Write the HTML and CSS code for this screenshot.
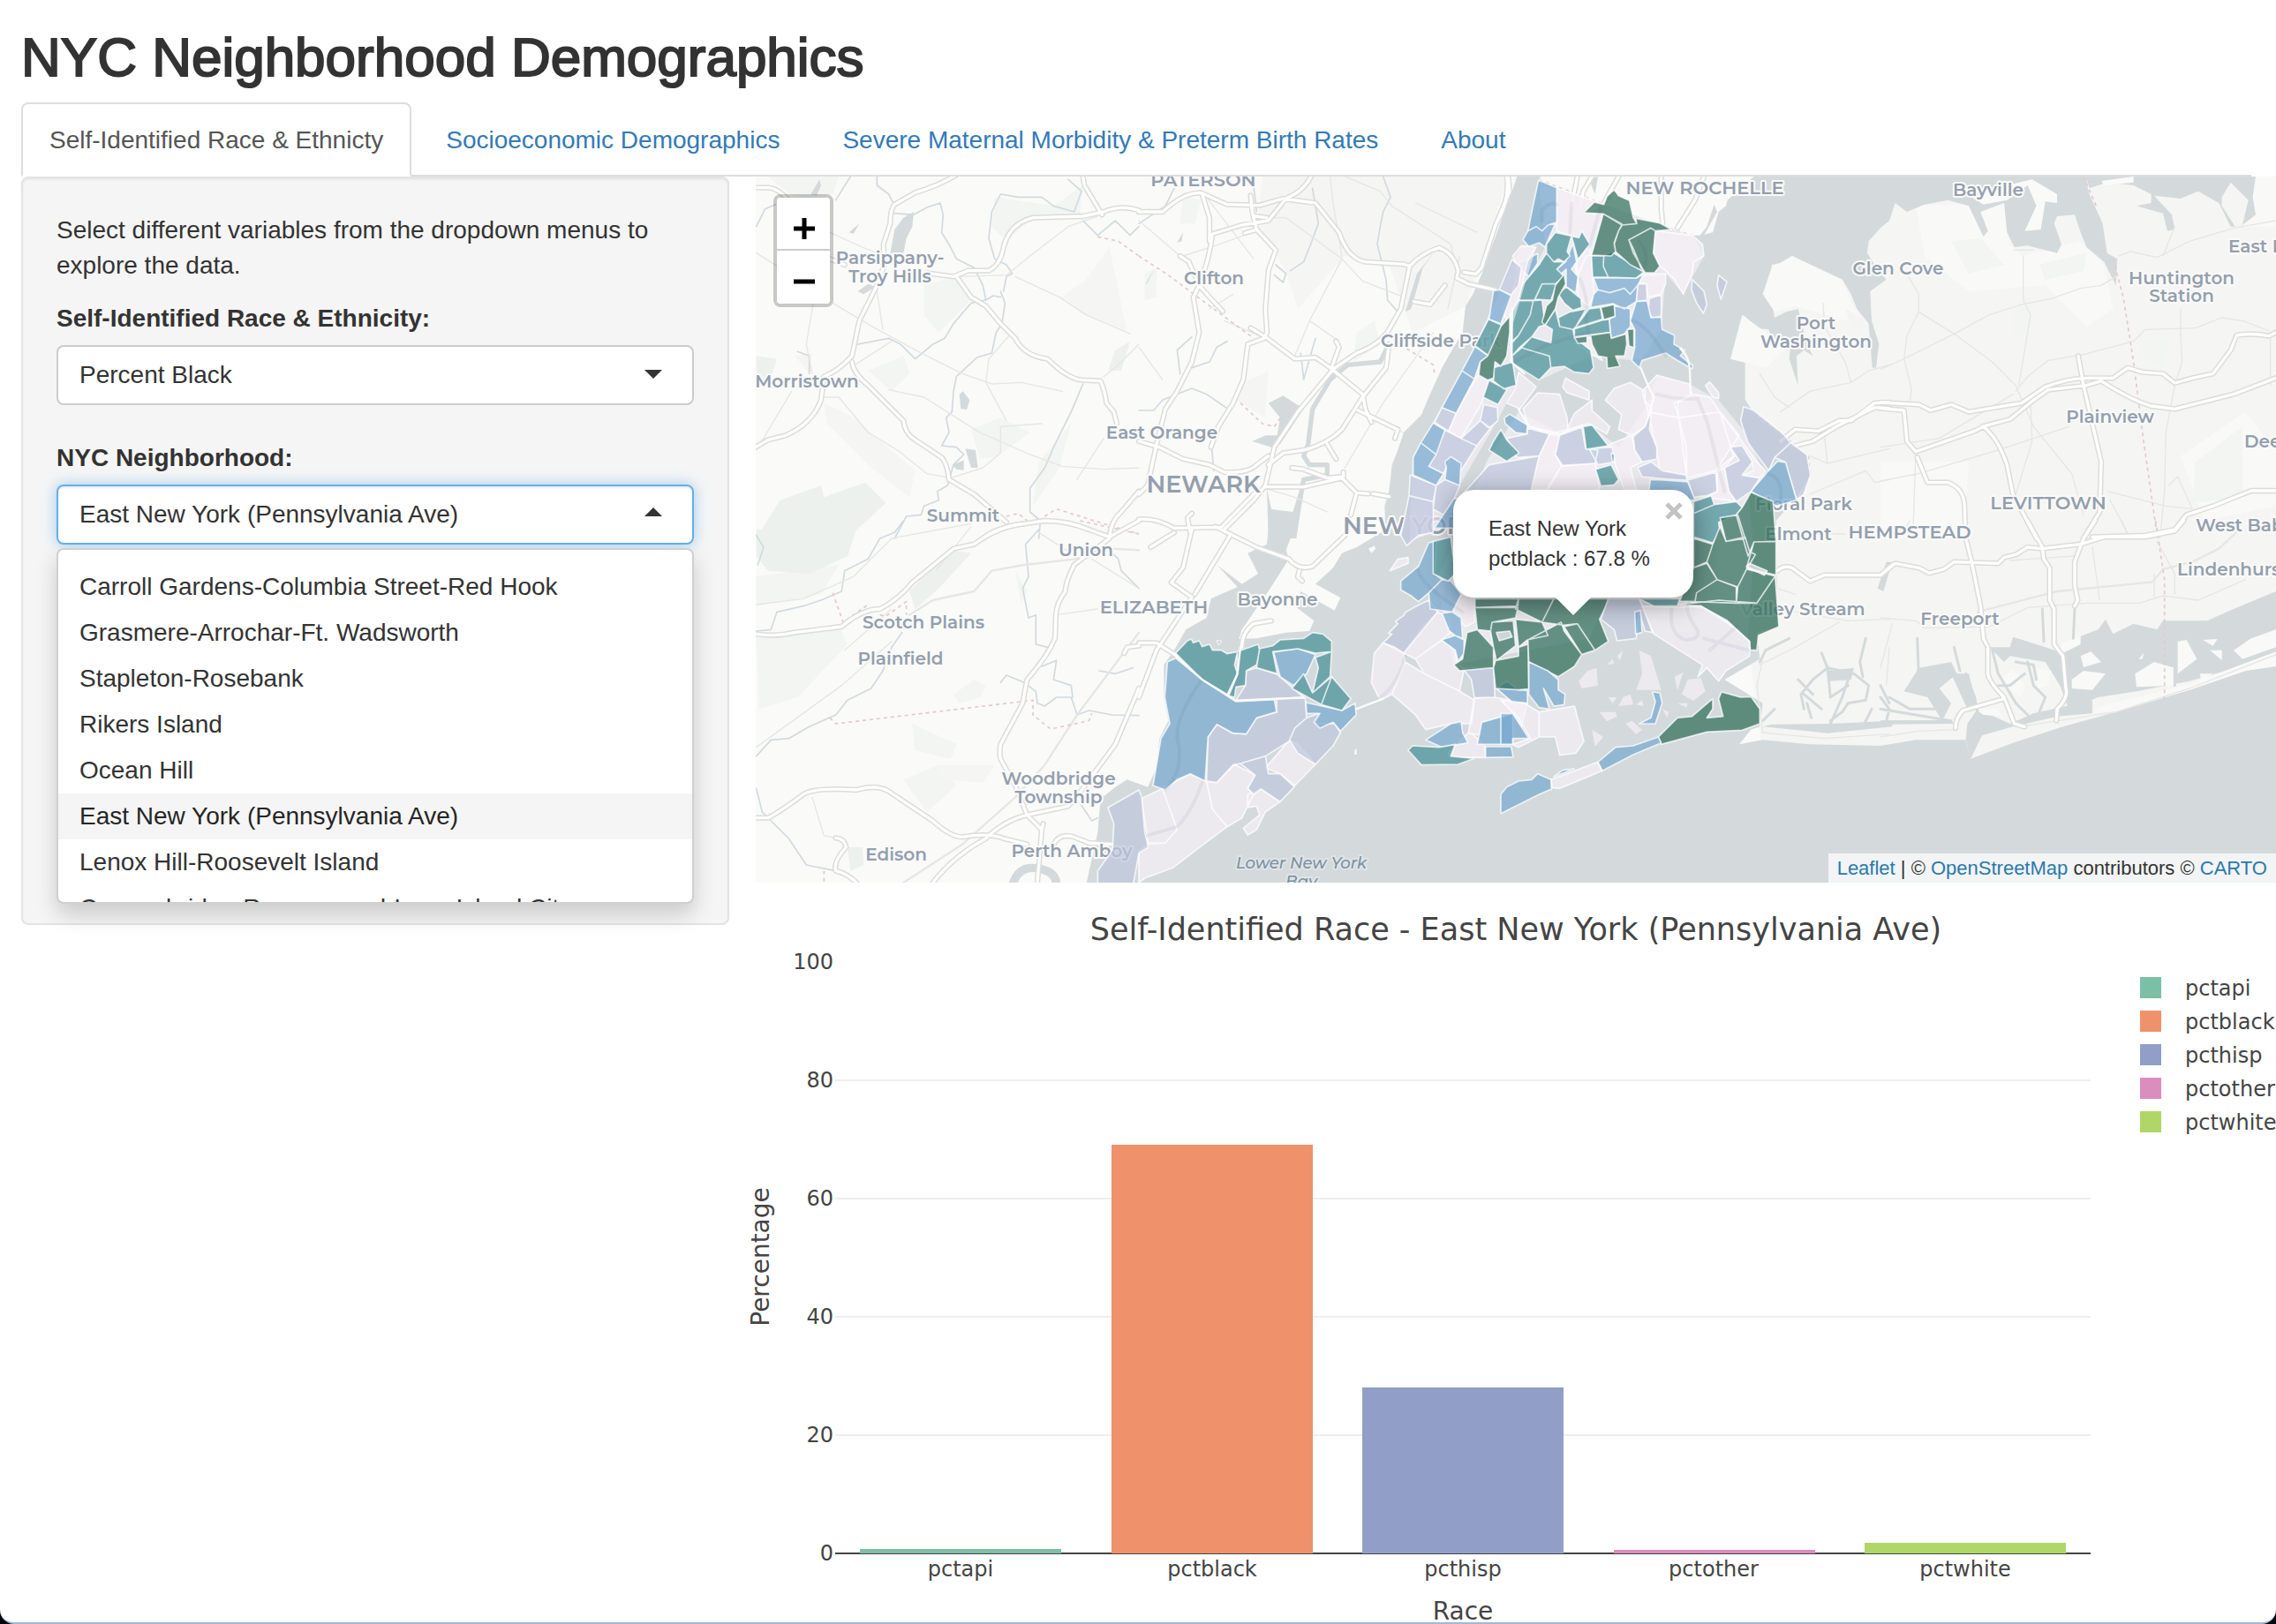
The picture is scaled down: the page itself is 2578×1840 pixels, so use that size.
FILE: index.html
```html
<!DOCTYPE html>
<html lang="en">
<head>
<meta charset="utf-8">
<title>NYC Neighborhood Demographics</title>
<link rel="stylesheet" href="styles.css">
</head>
<body>
<div class="page">
  <h1 class="title">NYC Neighborhood Demographics</h1>
  <nav class="tabs">
    <a class="tab active" href="#race">Self-Identified Race &amp; Ethnicty</a>
    <a class="tab" href="#socio">Socioeconomic Demographics</a>
    <a class="tab" href="#smm">Severe Maternal Morbidity &amp; Preterm Birth Rates</a>
    <a class="tab" href="#about">About</a>
  </nav>
  <div class="row">
    <aside class="well">
      <p class="intro">Select different variables from the dropdown menus to explore the data.</p>
      <div class="field">
        <label for="race-select">Self-Identified Race &amp; Ethnicity:</label>
        <div class="select">
          <select id="race-select"><option>Percent Black</option></select>
        </div>
      </div>
      <div class="field">
        <label for="hood-select">NYC Neighborhood:</label>
        <div class="select open">
          <select id="hood-select"><option>East New York (Pennsylvania Ave)</option></select>
          <div class="menu">
            <ul class="options" role="listbox" aria-label="NYC Neighborhood">
              <li role="option">Crotona Park East</li>
              <li role="option">Carroll Gardens-Columbia Street-Red Hook</li>
              <li role="option">Grasmere-Arrochar-Ft. Wadsworth</li>
              <li role="option">Stapleton-Rosebank</li>
              <li role="option">Rikers Island</li>
              <li role="option">Ocean Hill</li>
              <li role="option" class="current" aria-selected="true">East New York (Pennsylvania Ave)</li>
              <li role="option">Lenox Hill-Roosevelt Island</li>
              <li role="option">Queensbridge-Ravenswood-Long Island City</li>
            </ul>
          </div>
        </div>
      </div>
    </aside>
    <main class="main">
      <section class="map" aria-label="Map">
        <svg class="tiles" viewBox="856 200 1722 800" preserveAspectRatio="xMinYMin slice">
          <rect class="land" x="856" y="200" width="1722" height="800"/>
          <!-- built-up and park areas -->
          <path class="urban" d="M1970 200H2578V880L2000 880L1950 500Z"/>
          <g transform="translate(850 190) scale(.33333)">
            <path class="park" d="M590 400L700 370 760 440 700 500 640 560 590 500ZM830 100L1030 130 1130 60 1120 160 960 170 870 250 820 200ZM60 30H300L280 90 160 110ZM400 690L520 640 540 700 480 760ZM750 890L850 850 950 900 840 980 780 990ZM1180 400L1220 380 1210 480 1170 470ZM980 1000L1090 870 1050 1020 960 1150Z"/>
            <path class="park2" d="M100 1130L240 1080 250 1120 390 1070 460 1140 330 1260 20 1260ZM1240 620L1290 590 1260 690 1215 690ZM20 640L90 650 60 740 20 700Z"/>
            <path class="urban" d="M1060 440L1140 380 1220 270 1280 560 1140 500ZM150 640L210 630 200 700ZM250 800L350 850 560 1030 540 1120 400 1010 260 870Z"/>
            <path class="lake" d="M475 290L490 210 520 170 555 150 550 200 530 240 520 290ZM710 770L722 760 745 790 735 822 715 820ZM730 955L765 960 773 1020 750 1020ZM365 420L400 395 425 405 385 430ZM685 1010L725 995 725 1028 700 1025ZM205 90L235 40 240 60 225 95ZM335 220L370 190 350 225Z"/>
            <path class="river" d="M340 30L290 110M430 30V60L470 90 490 130M20 200L50 140 85 125M490 155L555 160 600 135 645 120 655 160 650 220 680 270 700 310 760 340 790 400 800 450 825 435 850 440M860 420L870 370 890 360 870 330 830 310 810 240 820 150 850 90 910 100 990 100 1030 130 1100 150 1125 80 1080 40M850 420L865 460 855 530 835 560 820 630 770 645 700 710 690 760 685 830 665 850 675 900 650 945 700 950 725 975 690 1010 670 1080 635 1100 640 1130 590 1150 580 1180 530 1185 490 1260M365 600L470 580 510 600 560 650 620 600 660 580 690 530 750 460 800 450M1130 180L1180 230 1240 180 1290 230 1320 200M1130 735L1090 830 1035 940 1000 1020 950 1090 950 1170 985 1200 980 1260M160 625L200 640 200 700"/>
            <path class="minor" d="M270 220L380 270 430 290M20 290L100 340M280 460L380 520 450 560 600 640 720 700 820 735 920 730 1060 760M240 780L300 780 400 900 500 960 600 1040 680 1055 790 1020 850 970 850 880 990 870M470 755L590 780 700 850 780 900 950 975 1060 1015 1200 1025 1320 1020M900 370L1050 440 1140 500 1290 565M800 730L870 860M800 730L810 650 880 570M1110 1060L1200 920M700 370L870 365 950 300 1080 200 1180 165M215 450L190 600 210 700M430 420L450 550M1320 600L1240 680 1200 710M480 590L340 680M20 960L140 760"/>
            <path class="dash" d="M1180 235L1250 250 1320 300M870 1185L910 1175 940 1200M1000 1185L1040 1160 1200 1210 1320 1245"/>
          </g>
          <g transform="translate(1290 190) scale(.33333)">
            <path class="urban" d="M420 30L1250 30 1200 230 1110 470 930 560 850 330 700 300 540 480 500 350 400 200ZM340 740L440 690 430 850 330 790Z"/>
            <path class="park" d="M150 100L210 110 190 190 140 190ZM20 360L60 340 60 440 20 450ZM740 560L800 520 820 600 730 660Z"/>
            <path class="lake" d="M1000 290L965 340 925 480 905 490 945 360ZM440 800L490 775 560 820 480 940 450 950 385 930 430 910 470 910 480 850ZM435 1090L450 1160 520 1180 545 1100 560 1100 535 1260 440 1260ZM130 255L150 220 145 250ZM20 400L55 340 30 390Z"/>
            <path class="river wide" d="M850 600L820 660 710 670 650 720 590 820 575 940 560 980 580 1010 640 1010 640 1045 560 1060 545 1140"/>
            <path class="river" d="M590 70L610 190 580 270 560 320 515 350M830 30L855 100 830 150 820 200 810 260 825 320 840 380 845 450 880 490M180 575L130 620 140 700M300 590L265 610 240 660 180 680M0 825H50L80 790 180 750 230 770 310 825M245 930L255 1030M465 330L500 360 490 390 460 365M120 70L90 130 0 190M390 60L400 150M550 630L560 720 600 580"/>
            <path class="minor" d="M0 180L140 300M440 170H500L690 310 580 520 530 640M690 310L760 385 900 440M150 300L260 265 385 220M580 520L680 590M650 30L660 120 690 300M700 30L820 80 860 130 1060 260 1090 380M0 610L80 720M430 1090L530 1120 640 1170M880 890L950 930M290 520L430 580M780 1110L915 1135M230 100L390 310M940 120L1150 220M700 1020L830 800 1000 560M240 480L320 430M1090 300L1050 480"/>
            <path class="dash" d="M0 300L100 365 200 440 390 580M345 800L420 870 460 880 485 845M910 615L1000 670 1005 700"/>
          </g>
          <g transform="translate(2130 190) scale(.33333)">
            <path class="lite" d="M120 130L420 120 440 260 480 300 680 250 760 330 790 480 700 540 560 400 300 420 150 300ZM1020 980L1240 830 1344 960 1344 1150 1100 1200ZM780 30H1344V0ZM1270 30H1344V200L1230 200ZM0 1000L300 1000 280 1260 0 1260Z"/>
            <path class="park" d="M450 480L510 470 500 560 450 570ZM890 590L980 580 960 680 890 640ZM1070 1000L1230 880 1230 1120 1060 1140ZM240 250L340 240 420 330 300 360ZM540 330L700 290 690 350 560 380Z"/>
          </g>
          <g transform="translate(850 590) scale(.33333)">
            <path class="park" d="M690 590L760 540 800 560 780 600 710 620ZM20 400L300 360 330 420 160 600 30 640ZM550 690L700 760 680 810 560 780ZM520 880L640 830 700 900 600 990ZM900 170L940 240 920 280ZM20 190L300 150 240 250 20 290Z"/>
            <path class="park2" d="M20 30H360L330 120 200 180 60 170 20 120ZM540 240L680 100 750 110 640 230 560 300ZM330 1110L380 1110 385 1170 340 1190Z"/>
            <path class="urban" d="M640 830L830 830 790 890 640 880Z"/>
            <path class="river" d="M520 0L490 40 440 60 400 130 320 170 310 240 240 270 180 290 90 310 70 370 20 375M515 380L480 430 450 510 410 570 330 610 290 660 200 700 130 740 70 745 20 800M20 910L40 990 130 1080 190 1170 290 1190M20 50L45 90 25 150M980 30L935 80 945 190 925 230 945 330 970 320 970 420 1010 430M850 550L870 525 930 550 970 580 975 620 1000 630 1040 600 1090 600 1110 660 1150 645 1230 660 1320 662M990 495L1040 475 1030 540 1090 560 1095 600M1220 100L1250 130 1260 170 1320 230M1185 510L1240 520 1300 500M1120 960L1160 1020 1180 1010"/>
            <path class="river ring" d="M890 1240Q910 1170 975 1182Q1040 1190 1040 1240"/>
            <path class="minor" d="M20 285L180 265 350 190 480 60 640 30 750 10M20 770L310 560 480 410M210 940L250 1070 290 1078M1040 320L1180 300M980 40L1120 130M1160 130L1320 230M320 440L480 300M750 20L630 170"/>
            <path class="minor thick" d="M540 320L620 270 760 240 820 170 930 150 1150 125M520 1230L720 1100 900 940 1000 830 1110 660 1260 460 1320 380M1230 95L1320 100"/>
            <path class="dash" d="M280 245L315 345 400 285M440 320L460 325 530 275 530 320M270 670L290 690 500 665 960 610 960 660 1020 708 1150 680 1160 655M250 1190V1230M1120 0L1320 45"/>
          </g>
          <!-- harbour, ocean and sound -->
          <g transform="translate(1290 590) scale(.33333)">
            <path class="lake" d="M1285-1170L1265-1110 1235-1030 1195-920 1170-850 1135-770 1110-730 1100-640 1070-590 1030-520 985-420 960-360 900-300 880-240 860-190 850-100 835-50 838 30 790 60 740 90 690 110 660 160 600 215 685 262 665 305 550 240 530 290 595 340 580 375 500 380 400 400 340 402 350 370 440 240 510 130 500 100 515 60 510 0 525-30 440-40 440 30 435 80 370 110 405 180 350 215 265 150 335 225 245 265 230 330 160 370 120 440 85 490 85 600 100 680 70 740 60 840 30 905-40 880-80 905-130 945-140 1060-160 1150-180 1240H3900V480L3760 510 3570 575 3320 650 3140 700 2970 755 2825 810 2810 745 2640 745 2520 765 2280 760 2120 745 2040 760 2080 710 2110 700 2120 620 1990 540 2110 470 2100 380 2170 360 2165 0 2235-80 2280-150 2270-220 2060-390V-1170Z"/>
            <path class="land" d="M780 95L800 85 805 95 790 110ZM733 780L740 775 740 795 733 795Z"/>
          </g>
          <g transform="translate(1700 190) scale(.33333)">
            <path class="lake" d="M800 30H1995L1992 60 2000 90 2045 190 2060 290 2095 310 2090 400 2050 320 1990 270 1970 220 1950 160 1890 165 1880 190 1905 260 1890 290 1790 265 1745 270 1720 220 1710 120 1630 150 1655 215 1640 235 1590 130 1520 110 1440 125 1380 150 1340 120 1320 180 1290 205 1250 250 1245 290 1270 330 1310 380 1255 420 1260 520 1285 600 1275 680 1262 680 1250 530 1210 480 1190 430 1160 380 1070 340 990 300 970 320 920 330 925 400 890 430 920 450 930 510 970 490 1010 480 1040 600 1060 640 1030 620 1005 640 1010 740 980 650 985 600 925 590 910 550 860 545 820 490 805 540 820 570 770 640 820 700 825 780 850 820 780 850Z"/>
            <path class="land" d="M135 30H860L770 110 765 130 740 150 720 220 680 230 640 230 130 45Z"/>
            <path class="land" d="M1805 40L1890 90 1890 120 1850 115 1835 210 1780 215 1820 130 1790 60 1720 110 1640 125 1600 100 1720 60Z"/>
            <path class="lite" d="M890 430L920 340 990 300 1160 380 1200 480 1245 530 1170 520 1000 470 930 490ZM820 500L900 560 960 620 900 680 780 650Z"/>
            <path class="park" d="M1170 480L1230 510 1240 550 1190 540Z"/>
            <path class="lake" d="M725 125L735 150 690 230 660 270 630 290 700 200ZM300 40L330 30 320 90Z"/>
            <path class="minor" d="M880 700L930 780 980 815M950 830L1050 760 1190 730 1250 690 1320 670M1190 730L1170 660 1100 540 1095 460M1050 980L1110 1005 1320 955M1100 920L1110 1005M1240 1030L1270 1070 1320 1060M1050 1110L1240 1030"/>
            <path class="dash" d="M130 42L340 120M460 170L650 230M845 820L990 935M1045 980L1052 1050"/>
          </g>
          <g transform="translate(2130 190) scale(.33333)">
            <path class="lake" d="M700 30H1275L1265 100 1275 160 1230 195 1250 110 1190 50 1160 100 1160 130 1205 200 1190 200 1150 120 1080 80 1020 105 930 95 990 160 1000 210 975 215 960 155 870 130 920 120 920 90 860 60 770 50 710 70Z"/>
            <path class="land" d="M750 45L860 30 860 50 760 60Z"/>
            <path class="minor" d="M95 370L130 430 130 490 90 570 80 650 105 750 100 800M130 490L250 565 380 660 460 740 520 880 650 1040 690 1180M0 685L80 650 250 565 370 500 480 465 580 445 680 410 750 400 800 370M485 300V450L510 500 470 740M455 280L520 280M570 655L690 635 860 590 900 550 1070 545 1160 510 1230 520 1320 555M570 655L500 710 460 760M810 300L850 285 940 305 1050 250 1200 205 1344 180M960 300L1000 200M1020 480V560L1025 660 1000 740 970 900 965 1100 950 1260M0 950L200 920 450 770M0 1065L130 1040 400 960 640 880M510 800L515 930 460 1110M770 1100L970 1150 1060 1160M780 1130L850 1260M120 960L110 1260M1325 580V740M980 1080L1010 1050 1060 1160"/>
            <path class="dash" d="M690 30L735 135M790 310L825 440 860 660 890 900 940 1250"/>
          </g>
          <g transform="translate(1700 590) scale(.33333)">
            <path class="lake" d="M890 700L1110 722 1330 700V680L1120 690 920 692ZM1280 230L1310 140 1330 140 1300 240ZM1110 510L1200 500 1190 540 1120 545Z"/>
            <path class="creek" d="M1030 640L1020 590 1060 540 1110 500 1200 520 1250 560 1240 610 1180 620 1160 650 1120 680M1110 500L1120 600 1180 560M1090 450L1110 500M1190 510L1160 600 1120 690M1240 400L1220 480 1230 530M1010 540L1060 590M1290 560L1320 620M880 480L900 440 980 400M1030 590L1090 640M890 680L930 640M1260 640L1230 700M1040 620L1055 670"/>
            <path class="minor" d="M880 490L1000 430 1150 345M940 300L1180 340 1320 335M890 470L870 560 890 720 1100 740 1320 725M1320 430L1310 560M940 230L1000 250M940 40L1170 45"/>
          </g>
          <g transform="translate(2130 590) scale(.33333)">
            <path class="lake" d="M130 500L240 480 260 520 200 570 240 620 210 680 160 600 80 580ZM370 430L440 430 450 395 560 430 620 450 660 400 740 370 765 335 790 385 860 350 940 370 960 340 1110 340 1200 300 1344 240V500L1210 500 1050 545 870 580 740 600 640 640 610 560 560 480 440 460 420 480ZM0 678H240L250 690 0 692ZM295 690L330 640 440 690 520 655 720 610 720 655 600 665 450 700 345 730 305 812 290 740ZM240 520L300 520 330 640 300 650Z"/>
            <path class="lite" d="M650 540L690 510 765 520 720 575 650 570ZM680 460L715 445 750 480 690 498ZM865 520L930 480 1000 500 1000 560 870 565ZM1010 410L1040 405 1075 470 1010 520ZM1200 440L1260 400 1344 370V430L1230 470ZM1120 440L1160 440 1160 475ZM520 500L580 510 570 560 530 570ZM610 420L680 390 680 420 620 450ZM1085 520L1130 520 1090 545ZM878 470L895 448 890 470ZM1095 405L1145 402 1130 425ZM320 640L400 640 410 665 350 660ZM720 650L750 630 870 600 1050 555 1344 445V495L1240 510 1050 575 800 650ZM410 535L450 505 490 560 480 600 430 570Z"/>
            <path class="creek" d="M290 520L320 600 340 700M380 440L400 520 460 620 500 660M30 600L100 640 200 640M500 480L520 560 560 600 540 650M0 640L120 660 240 680M125 400L130 520M250 430L270 510M550 300L555 410M660 300L655 400M1000 430V560M460 480L520 490 530 540M0 600L30 640 20 680M400 560L440 560 490 520"/>
            <path class="minor" d="M0 330L120 340 150 365 370 360 500 295 700 280 880 280 960 255 1080 270 1240 200M490 697L800 650 1050 570 1344 455M0 735L130 715 250 710M940 70L1000 180 1000 250M440 135L660 120M720 90L745 270M40 350L0 500M930 260V180M60 60L100 0M820 0L840 50"/>
            <path class="minor thick" d="M330 310L600 240 925 208 960 165 1060 140 1150 95 1220 30"/>
            <path class="dash" d="M935 0L965 200V620"/>
          </g>
          <!-- motorways: casing below, white core above -->
          <g class="casing">
            <use href="#hw-nw"/><use href="#hw-nj"/><use href="#hw-c"/><use href="#hw-ne"/><use href="#hw-sw"/><use href="#hw-s"/><use href="#hw-g"/><use href="#hw-se"/>
          </g>
          <g class="core">
            <g id="hw-nw" transform="translate(850 190) scale(.33333)"><path d="M18 68H60Q90 68 130 110M700 25Q640 60 560 85L490 125Q475 140 475 190L452 260 455 330 430 400 370 520 345 640Q300 690 250 710L240 790Q210 870 120 910L60 925 18 950M345 660Q350 700 400 740L520 860Q525 905 560 925L650 985Q670 1010 675 1060L760 1110 870 1205M270 310L320 330M600 358L690 370 740 350 810 350Q850 330 860 270Q880 190 960 170L1130 165 1200 150Q1260 125 1320 145M1130 30L1135 60 1195 160M700 370L750 440 800 470 850 530 900 580Q930 640 1010 650Q1080 720 1130 722L1190 725Q1205 760 1210 800L1235 830 1245 870M790 1260Q840 1220 930 1210L1000 1200Q1080 1200 1150 1230L1220 1255 1320 1200M1220 1255Q1225 1200 1260 1170L1320 1100"/></g>
            <g id="hw-nj" transform="translate(1290 190) scale(.33333)"><path d="M0 150H80L110 125Q160 85 210 85L300 125 410 128 490 105 600 120Q640 170 680 220Q710 310 770 320L900 328 920 335Q960 290 1020 272Q1070 290 1085 350L1080 375 1120 395 1210 415M585 30Q560 80 500 105L440 180 350 195 250 225Q240 310 205 400M215 90L240 170V250M380 95L385 150 400 210 465 280 440 350 430 480 435 560 425 580 370 600 355 720 320 800 270 880 245 950M395 165L435 170M360 222L395 212M140 300L170 320 205 400 240 440 285 488M380 545L430 575 530 650 600 645 650 680 760 770 770 820 790 865M205 400L185 440 205 560 180 660 130 760 90 820 60 940 30 1080 0 1110M0 930L70 950 150 990 240 1010 290 1035Q370 1040 400 1010L440 980M920 335L890 480 850 550Q820 600 740 630L660 685 540 830 460 950 430 1080 390 1130 290 1230M850 600L840 680 760 780 690 890Q640 940 560 960L490 970 440 1010M430 1085H560L690 1055 740 1105 720 1180M520 1020L560 1025 640 1055 695 1050V1035M740 1105L780 1108M795 1108L850 1118M745 825L880 890 870 920M640 940L670 990M1255 30L1260 80 1210 200 1165 340 1145 362 1105 355M935 455L990 465 1040 400M670 590L680 610 655 680M0 1195Q60 1190 120 1225L280 1222 400 1100M180 1175L165 1190 175 1240"/></g>
            <g id="hw-c" transform="translate(1700 190) scale(.33333)"><path d="M20 30Q30 110-10 180M400 30L350 120M260 30L240 130M310 30L280 80 270 130M545 30V140L550 190M690 30L660 110 600 205M950 930L1000 890 1080 895 1150 860 1190 860 1270 800 1320 798M1000 945L1060 930 1140 880 1220 840 1270 815 1320 818"/></g>
            <g id="hw-ne" transform="translate(2130 190) scale(.33333)"><path d="M0 798L130 805 170 825 240 805 300 830 480 800 560 745Q640 715 700 715L790 715 840 680 890 695 960 700 1000 732 1060 715 1130 700 1190 620 1210 570Q1260 560 1320 572L1344 560M345 880L440 855 520 790 570 755 700 740 750 725Q850 790 920 810L1000 820 1120 790 1200 770 1344 715M0 818L80 825 90 930 120 965 320 895 350 880Q400 920 430 1010L450 1110 530 1260M125 985L160 1070 230 1070Q280 1090 285 1140L288 1210M672 640L690 740 750 1000 745 1170 690 1260M720 1255L900 1250 1000 1230 1040 1180 1130 1150 1260 1098 1344 1098"/></g>
            <g id="hw-sw" transform="translate(850 590) scale(.33333)"><path d="M18 385Q90 395 150 380L310 360Q380 300 440 300Q500 270 550 210L690 95 760 80Q840 20 930 10M1220 60L1100 150Q1070 210 1070 240Q1040 280 1038 320L1035 400Q1010 460 940 540L925 620 850 760Q845 790 850 810L900 900 940 1000 990 1050 975 1230M18 1010H60Q100 990 180 930Q220 905 360 915Q430 895 470 920L620 1020Q680 1075 720 1075Q810 1060 860 1080L940 1100M620 1230Q690 1140 800 1080Q860 1020 940 1000L1080 970 1130 910 1240 760 1320 570M290 1078Q320 1080 325 1110Q280 1160 290 1190Q330 1200 360 1230M1030 1100Q1050 1060 1100 1075L1150 1095 1230 1100M990 1050L995 1030M1320 425L1280 430 1270 450"/></g>
            <g id="hw-s" transform="translate(1290 590) scale(.33333)"><path d="M40 90L120 40M180 30L150 160 110 210 180 260 60 440 0 600M310 50L190 250M260 20L400 90 510 130Q540 170 590 155L700 50M545 170L540 190 555 205M0 415L60 415 130 460M350 430Q350 380 390 350L450 340"/></g>
            <g id="hw-g" transform="translate(1700 590) scale(.33333)"><path d="M940 170Q960 150 990 160L1050 205 1100 185 1290 185 1330 150"/></g>
            <g id="hw-se" transform="translate(2130 590) scale(.33333)"><path d="M0 185L50 145 130 160 165 178 215 165 250 140 400 145 420 125 460 115 500 90 550 95 680 80 760 55 900 55 1000 35 1030 0M290 60L310 140 340 290 350 400 365 430 365 520Q370 550 420 600L455 690 490 700M500 0L550 90 555 130 575 160 575 270 590 300 590 420 620 460 630 570Q640 600 600 640L598 680M730 0L690 60 660 140 660 220 670 270 660 290M420 605L280 645Q255 670 255 705"/></g>
          </g>
          <!-- place names -->
          <g class="names">
            <text class="town" x="1008" y="299">Parsippany-</text><text class="town" x="1008" y="320">Troy Hills</text>
            <text class="town" x="914" y="439">Morristown</text><text class="town" x="1091" y="591">Summit</text>
            <text class="town" x="1375" y="322">Clifton</text><text class="town" x="1316" y="497">East Orange</text>
            <text class="town" x="1632" y="393">Cliffside Park</text><text class="town" x="2150" y="311">Glen Cove</text>
            <text class="town" x="2057" y="373">Port</text><text class="town" x="2057" y="394">Washington</text>
            <text class="town" x="2043" y="578">Floral Park</text><text class="town" x="2037" y="612">Elmont</text>
            <text class="town" x="2252" y="222">Bayville</text><text class="town start" x="2524" y="286">East Northport</text>
            <text class="town" x="2471" y="322">Huntington</text><text class="town" x="2471" y="342">Station</text>
            <text class="town" x="2390" y="479">Plainview</text><text class="town start" x="2542" y="507">Deer Park</text>
            <text class="town start" x="2487" y="602">West Babylon</text><text class="town start" x="2466" y="652">Lindenhurst</text>
            <text class="town" x="1230" y="630">Union</text><text class="town" x="1046" y="712">Scotch Plains</text>
            <text class="town" x="1020" y="753">Plainfield</text><text class="town" x="1199" y="889">Woodbridge</text>
            <text class="town" x="1199" y="910">Township</text><text class="town" x="1015" y="975">Edison</text>
            <text class="town" x="1214" y="971">Perth Amboy</text><text class="town" x="1447" y="686">Bayonne</text>
            <text class="town" x="2042" y="697">Valley Stream</text><text class="town" x="2220" y="708">Freeport</text>
            <text class="sea" x="1474" y="984">Lower New York</text><text class="sea" x="1474" y="1005">Bay</text>
            <text class="city" x="1363" y="211">PATERSON</text><text class="city" x="1931" y="220">NEW ROCHELLE</text>
            <text class="city" x="2163" y="610">HEMPSTEAD</text><text class="city" x="2320" y="577">LEVITTOWN</text>
            <text class="city" x="1307" y="695">ELIZABETH</text>
            <text class="metro" x="1363" y="558">NEWARK</text><text class="metro start" x="1521" y="605">NEW YORK</text>
          </g>
          <!-- neighbourhood choropleth -->
          <g class="hood">
            <g transform="translate(1700 190) scale(.33333)">
              <path class="base" d="M60 830L200 900 300 870 400 950 500 800 530 705 640 735 740 790 830 900 900 1050 840 1100 860 1300 840 1600 690 1500 365 1465 300 1600-160 1690-220 1400-150 1260-50 1000ZM130 45L650 230 690 300 620 430 560 360 545 550 480 650 445 655 310 640 130 722 40 665 38 490 150 270Z"/>
              <path class="q1" d="M190 68L350 125 285 153 348 157 308 297 290 300 260 370 250 330 265 310 240 232 190 215ZM525 215L650 230 685 260 690 300 655 320 650 360 620 430 590 380 560 350 540 335 518 290ZM485 365L560 360 560 395 545 430 500 440 495 395 470 390ZM257 320L300 265 308 300 312 372 318 430 298 470 262 440 262 370ZM250 598L305 575 335 640 345 655 310 635ZM60 695L120 745 65 820 20 800 50 750ZM75 820L125 765 200 770 225 850 228 890 165 905 95 880ZM220 715L300 760V790L225 765 210 745ZM225 890L250 835 310 790V825L370 880 360 905 300 870ZM130 980L165 905 200 910 185 975 205 1015 160 1095H100ZM205 1015L320 1005 335 1085 330 1100H150ZM355 790L385 750 440 730 490 760V790L510 820 490 880 445 910 400 890 410 840ZM480 760L530 705 640 735 650 770 590 800 605 850 500 830ZM500 830L605 850 630 950 632 1045 540 1030 530 960ZM650 770L710 780 745 830 605 850 600 800ZM605 850L745 830 810 910 730 1030 632 1055ZM745 830L870 1000 900 1030 880 1055 820 1045 860 1030 850 990 810 960 760 1020 730 1030 790 980ZM695 740L710 728 740 765V785L720 780ZM370 940L445 910 455 960 480 1000 440 1020 460 1095H420L385 1000ZM735 1035L760 1020 775 1100 800 1135 700 1120 735 1100Z"/>
              <path class="q2" d="M465 395H495L497 450 460 455ZM505 445L545 432V505L515 510 500 490ZM90 885L165 905 130 980 55 985 20 920 90 905ZM200 910L275 882 288 955 330 960 320 1005 210 1012 185 975ZM-40 1010L130 980 100 1110H-130ZM300 955L378 950 388 1000 330 1010ZM450 915L490 880 512 825 505 890 530 950V990L480 1000 455 960ZM465 1020L510 1000 550 1030 630 1045 632 1062 560 1058 480 1050ZM635 1062L730 1035 735 1100 700 1115 655 1120ZM815 860L825 812 860 825 960 905 985 935 930 985 910 1030 840 935ZM985 935L1040 975 1052 1045 1030 1110 1005 1128 965 1000 930 985ZM760 1020L810 995 780 950 820 945 855 1000 820 1045 880 1055 850 1100 800 1135 775 1100ZM650 380L690 420 700 465 688 495 665 460 648 415ZM740 365L768 388 748 448 735 400Z"/>
              <path class="q3" d="M128 42L190 68V185L160 195 140 215 120 200 92 215 105 150ZM92 215L120 200 140 215 160 195 185 190 165 235 150 270 130 255 95 268 75 245ZM60 325L125 292V325L95 370 70 345ZM190 345L220 320 245 258 257 320 240 345 262 370 255 425 222 405V345L200 365ZM315 375H460L485 362 465 400 440 430 420 410 370 425 330 415ZM330 415L370 425 420 410 440 430 465 400 460 455 420 480 380 462 305 475 315 430ZM460 455L497 453 510 510 545 508 548 550 590 570 588 600 625 620 610 640 652 672 650 684 600 655 560 630 480 655 470 680 445 655 455 610V550L440 520ZM385 470L440 480V540L420 565 375 580 368 515 388 505ZM12 850L30 838 90 875 88 905 50 900 15 870ZM508 1060L550 1062 635 1068 660 1130H500ZM940 998L968 1002 1005 1130 935 1150 850 1100 905 1035Z"/>
              <path class="q4" d="M308 300H350L348 335 365 372H312ZM350 300L375 285 440 325 485 355 460 375 365 372 348 335ZM185 220L240 232 225 285 235 300 215 320 195 310 180 320 155 290V260ZM240 232L265 238 275 215 302 260 262 312 245 250ZM130 330L155 290 180 320 215 320 190 345 215 370 185 395 140 395 115 450H55L75 395ZM140 395H190L170 450 115 447ZM195 430L222 405 272 445 275 475 245 485 215 460ZM55 452H110L100 500 60 570 38 590V490ZM110 452L140 450 150 535 130 540 105 575 65 610 38 640V595L60 570 100 500ZM150 535L185 480 200 540 245 550 250 578 305 620 315 680 300 700 250 695 215 675 170 680 165 640 70 612 105 575 170 595 175 550ZM38 640L70 612 165 640 170 680 130 722 40 665ZM195 510L235 490 290 480 255 540 245 550 200 540ZM255 540L300 480 338 475 345 515 250 545ZM250 548L345 518 368 515 372 560 250 575ZM280 880L310 875 365 945 290 957ZM0 890L20 925 62 970 20 998-40 960-25 930ZM322 1025L375 1010 400 1060 385 1078 340 1082ZM375 970L385 975 385 1000 378 995ZM655 1135L715 1115 725 1145 655 1175ZM655 1175L725 1145 800 1135 820 1155 800 1180 740 1205 745 1240 720 1275 655 1255Z"/>
              <path class="q5" d="M282 153L318 117 350 125 360 98 385 75 400 95 437 112 450 170 462 190 412 195 348 157ZM348 157L412 192 400 215 385 255 390 285 375 300 308 297ZM412 195L462 190 458 172 540 188 580 210 525 215 510 205 435 245 450 275 480 350 440 330 390 285 385 260 400 215ZM435 245L510 205 525 215 518 290 540 335 522 357H490L450 290ZM340 475L385 465 388 505 350 517ZM305 570L372 560 375 580 425 565 428 600 420 640 390 640 405 675 362 682 360 645 330 640 310 600ZM430 550L452 548V612L435 605ZM250 578L293 572V595L262 597ZM215 362L220 395 195 440 185 480 150 535 140 525 155 470 175 450 185 400ZM850 1103L925 1135 935 1270 860 1272 840 1320 800 1180 820 1155ZM745 1190L805 1180 830 1260 765 1270ZM720 1280L745 1220 765 1270 830 1255 845 1305 865 1315 835 1365 805 1425 735 1400 700 1340ZM860 1272L935 1270 935 1385 835 1360ZM835 1365L932 1388 870 1480 800 1480 805 1425ZM655 1260L720 1280 700 1340 655 1360ZM655 1360L700 1345 735 1400 665 1445 660 1475 608 1473ZM665 1445L735 1400 800 1425V1480L660 1475ZM608 1485L740 1470 870 1480 932 1388 945 1560 875 1590 870 1640H848L845 1610 770 1540 680 1490Z"/>
            </g>
            <g transform="translate(1290 190) scale(.33333)">
              <path class="base" d="M1300 265L1350 270 1262 560 1282 740 1218 860 1090 1080 1000 1240 920 1270 930 985 1100 690Z"/>
              <path class="q1" d="M1270 300L1300 265 1350 270 1320 320 1290 450 1250 520 1235 480 1265 430 1290 350ZM1155 700L1190 722 1165 800 1095 920 1052 895 1078 835Z"/>
              <path class="q2" d="M1268 312L1300 340 1290 400 1265 432 1225 415ZM1030 815L1078 835 1052 895 1005 865ZM1172 805L1218 815 1220 860 1190 885 1160 860ZM1040 892L1095 920 1148 945 1095 1030 1080 995 1060 985 1035 1040 985 1015ZM1095 920L1160 860 1195 885 1148 945ZM922 1045L1010 1080 1000 1135 918 1115ZM1010 1080L1040 1060 1090 1080 1070 1130 1035 1180 1000 1160ZM918 1115L1000 1135 1000 1240 950 1250 910 1285 890 1250Z"/>
              <path class="q3" d="M1205 418L1225 415 1265 435 1230 530 1190 515ZM1142 608L1188 640 1160 660 1140 718 1098 690ZM1098 690L1140 718 1078 835 1030 815ZM1000 868L1040 892 1010 975 958 935ZM958 935L1010 975 985 1015 1035 1040 1010 1080 932 1045V985ZM1060 982L1095 1005 1090 1080 1040 1060 1045 1020 1040 1000ZM1070 1125H1110L1080 1225H1005Z"/>
              <path class="q4" d="M1188 515L1232 535 1190 640 1142 605ZM1205 680L1270 660 1282 740 1240 752 1205 725ZM1190 722L1250 755 1220 805 1170 780Z"/>
              <path class="q5" d="M1260 505V560L1250 640 1230 675 1210 660 1205 715 1185 722 1155 705 1160 660 1185 640 1230 540Z"/>
            </g>
            <g transform="translate(1290 590) scale(.33333)">
              <path class="q1" d="M830 415L900 450 905 480 860 590 820 610 790 550 800 450ZM900 450L965 360 1015 310 1055 330 1060 380 1030 405 940 470ZM940 470L1030 405 1075 440 1080 480 1105 505 1090 580 970 520ZM860 590L905 480 970 520 1090 580 1140 610 1130 690 1060 690 975 710 940 660ZM1140 603L1210 600 1320 620 1300 700 1270 655 1165 685 1160 730 1120 720ZM1065 310L1095 250 1142 265 1140 345 1110 360ZM1050 790L1080 760 1120 720 1140 730 1175 765 1178 805 1060 803ZM853 170L880 130 915 125 915 145ZM512 745L540 760 600 828 530 900 480 860 430 840ZM370 930L415 912 480 955 430 990 400 1050 370 1068 355 1045 410 1000 400 970 370 975ZM8 945L80 910 130 1050 90 1095 32 1095ZM80 910L175 860 230 885 250 980 300 1040 200 1115 115 1180 20 1215 0 1230V1125L30 1100 90 1095 130 1050ZM230 885L265 890 325 828 395 865 370 910 390 930 350 1010 300 1040 250 980Z"/>
              <path class="q2" d="M830 415L860 385 848 382 880 350 872 342 900 322 905 312 940 292 985 270 1015 310 900 450 870 430ZM1100 500L1205 498 1210 600 1140 602 1130 540ZM365 510L400 500 470 522 525 570 560 600 330 610 362 560ZM468 605L565 602 570 670 530 705 510 750 430 800 345 825 320 830 265 890 230 885 235 735 265 692 320 722 365 725 400 670 468 650ZM530 705L570 670 615 655 600 690 665 690 685 720 660 765 600 828 540 790 512 745ZM345 825L430 800 440 860 480 860 528 905 480 955 415 912 390 930 370 910 395 865ZM-105 975L0 915 10 940 20 1060 32 1110 0 1130-20 1240H-140V1190L-90 1120-85 1030Z"/>
              <path class="q3" d="M890 205L950 155 985 75 1010 70 1005 180 1030 200 985 245 950 275 925 255 890 235ZM985 245L1030 200 1060 205 1095 250 1065 310 990 300ZM1030 315L1065 310 1095 330 1100 400 1075 390 1055 375ZM1028 405L1075 390 1105 405V450L1085 478 1075 440ZM1215 570L1250 545 1290 575 1320 577V620L1270 618ZM975 745L1060 690 1095 682 1100 720 1118 755 1030 770ZM1165 685L1270 655 1272 760H1150ZM1178 768H1265L1272 803 1178 805ZM458 447L540 435 600 455 570 520 525 560 480 530ZM97 480L125 467 215 540 330 615 460 608 468 650 400 670 365 725 320 722 265 692 235 735 225 885 175 860 130 880 90 915 48 900 75 740 105 690 88 600ZM568 618L690 645 735 620 738 660 685 715 660 685 615 705 595 685 615 655 570 655Z"/>
              <path class="q4" d="M1000 70L1060 55 1075 180 1050 205 1000 180ZM915 780L930 765 1020 770 1075 760 1060 800 1140 808 1085 828 960 830ZM125 450L165 408 178 402 185 415 205 408 215 428 240 420 250 440 280 440 300 452 335 445 325 490 335 520 300 590 215 540ZM335 445L405 420 410 440 400 490 365 510 362 560 330 565 325 600 305 595 335 520ZM410 435L455 425 480 405 560 400 590 380 625 385 655 410V445L600 450 540 435 455 445 470 520 400 500ZM600 465L655 445 650 530 590 585 610 500ZM590 585L655 530 620 625 520 570 560 520ZM655 530L720 605 690 645 620 625ZM265 408L280 410 272 420Z"/>
            </g>
            <g transform="translate(1700 590) scale(.33333)">
              <path class="q5" d="M-88 265H60L58 290-88 295ZM60 265H180L140 345 50 300ZM-88 295L58 295 50 330-30 345-35 375-80 370ZM-35 375L-30 345 42 340 50 425-15 475-25 430ZM-115 380L-80 370-25 430-25 500-140 510-160 490-130 470ZM50 335L140 345 160 390 90 405 60 430ZM-25 500L-18 475 60 460 60 430 92 420 95 572 60 575-18 570ZM92 405L205 345 215 375 275 455 250 495 195 530 95 480ZM140 345L180 265H370L335 335 365 410 320 440 260 350 215 355ZM215 360L260 350 320 440 275 455ZM535 735L600 670 650 665 690 630 720 605V640L700 670 755 665 740 605 750 582 780 590 815 600 850 598 880 640V690L820 712 700 718 545 760Z"/>
              <path class="q1" d="M-15 380L30 375 38 395-5 408ZM835 155L845 145 905 170 895 185ZM475 290L600 295 680 290 770 345 845 410V460L765 510 740 545 700 500 670 530 685 490 520 385 500 340ZM0 610L80 620 130 650 130 735 60 770 40 760 100 740 60 670ZM130 650L250 630 282 750 255 790 200 797 185 735H130ZM170 880L330 820 345 850 200 910 175 908Z"/>
              <path class="q2" d="M365 265H470L485 300 515 380 490 375 470 310 460 400 395 408 385 370 340 335Z"/>
              <path class="q3" d="M95 480L160 510 195 540V575L218 590 215 625 180 630 145 570 165 640 130 635 95 590ZM0 655H40L95 740 40 740V760H0ZM515 582L540 585 548 620 525 690H470L510 670 525 615ZM330 820L390 770 450 765 535 735 545 755 450 795 345 850ZM0 930L20 905 60 885 105 880 125 860 170 880 172 912 130 930 0 995ZM180 870L210 848 250 843ZM455 310L475 305 480 380 458 385Z"/>
              <path class="q4" d="M470 265H608L600 290 520 290Z"/>
              <path class="islet" d="M265 545L295 510 325 500 330 560 275 570ZM470 440L510 460 545 575 460 575 480 520ZM635 540L680 535 695 580 655 612 615 590ZM335 650L390 650 395 665 360 682ZM425 690L445 680 480 710 460 725ZM310 710L348 735 320 767ZM360 490L380 470 385 485ZM395 460L415 440 405 475ZM590 530L620 515 600 575ZM415 600L440 590 450 625 400 630ZM600 620L635 620 630 635ZM550 640L570 650 565 670ZM460 625L480 610 485 630ZM365 600L395 600 380 620Z"/>
            </g>
          </g>
          <!-- roads that show faintly through the choropleth, and bridges -->
          <g transform="translate(1290 590) scale(.33333)">
            <path class="ghost" d="M210 545Q110 690 135 760Q150 850 90 915M215 890Q180 990 130 1040L30 1070M815 605Q880 560 905 460M950 170Q960 220 1100 310"/>
            <path class="bridge" d="M738 640L830 605M130 465L215 540 330 612 560 601M345 430L335 520 305 590"/>
          </g>
          <g transform="translate(1700 190) scale(.33333)">
            <path class="ghost" d="M140 180V145Q165 115 190 125M240 120L235 220M340 130L300 270M270 380Q300 450 290 520L300 570M470 250Q510 300 480 350M450 520Q500 540 560 640M530 770Q600 790 670 785M670 790L700 860 760 1100M45 660L160 600 300 560M910 1040Q960 1060 950 1130"/>
            <path class="ghost" d="M580 1500Q570 1590 630 1605Q690 1600 660 1560Q620 1500 640 1480M690 1600L840 1640M710 1640L800 1560"/>
            <path class="bridge" d="M475 680L500 740 520 780 500 850M610 615Q640 640 642 690L645 770M38 480L35 660 80 700M60 820L95 880 200 905 280 875"/>
          </g>
        </svg>

        <div class="zoom">
          <button type="button" aria-label="Zoom in"><svg width="24" height="24" viewBox="0 0 24 24"><path d="M0 12H24M12 0V24"/></svg></button>
          <button type="button" aria-label="Zoom out"><svg width="24" height="24" viewBox="0 0 24 24"><path d="M0 12H24"/></svg></button>
        </div>

        <div class="popup">
          <p>East New York<br>pctblack : 67.8 %</p>
          <button type="button" class="close" aria-label="Close"><svg width="20" height="20" viewBox="0 0 20 20"><path d="M2 2L18 18M18 2L2 18"/></svg></button>
        </div>

        <div class="credit"><a href="#leaflet">Leaflet</a> | © <a href="#osm">OpenStreetMap</a> contributors © <a href="#carto">CARTO</a></div>
      </section>

      <svg class="chart" viewBox="856 1000 1722 838" role="img" aria-label="Self-Identified Race bar chart">
        <text class="chart-title" x="1717" y="1065">Self-Identified Race - East New York (Pennsylvania Ave)</text>
        <path class="grid" d="M946 1224H2368M946 1358H2368M946 1492H2368M946 1626H2368"/>
        <path class="axis" d="M946 1760H2368"/>
        <rect fill="#7cbfa7" x="974" y="1755" width="228" height="5"/>
        <rect fill="#ef916b" x="1259" y="1297" width="228" height="463"/>
        <rect fill="#919fc8" x="1543" y="1572" width="228" height="188"/>
        <rect fill="#db8dbf" x="1828" y="1756" width="228" height="4"/>
        <rect fill="#afd767" x="2112" y="1748" width="228" height="12"/>
        <g class="tick end">
          <text x="944" y="1098">100</text><text x="944" y="1232">80</text><text x="944" y="1366">60</text>
          <text x="944" y="1500">40</text><text x="944" y="1634">20</text><text x="944" y="1768">0</text>
        </g>
        <g class="tick mid">
          <text x="1088" y="1786">pctapi</text><text x="1373" y="1786">pctblack</text><text x="1657" y="1786">pcthisp</text>
          <text x="1941" y="1786">pctother</text><text x="2226" y="1786">pctwhite</text>
        </g>
        <text class="axis-title" x="1657" y="1835">Race</text>
        <text class="axis-title" transform="translate(871 1424) rotate(-90)">Percentage</text>
        <g class="tick">
          <rect fill="#7cbfa7" x="2424" y="1107" width="24" height="24"/><text x="2475" y="1128">pctapi</text>
          <rect fill="#ef916b" x="2424" y="1145" width="24" height="24"/><text x="2475" y="1166">pctblack</text>
          <rect fill="#919fc8" x="2424" y="1183" width="24" height="24"/><text x="2475" y="1204">pcthisp</text>
          <rect fill="#db8dbf" x="2424" y="1221" width="24" height="24"/><text x="2475" y="1242">pctother</text>
          <rect fill="#afd767" x="2424" y="1259" width="24" height="24"/><text x="2475" y="1280">pctwhite</text>
        </g>
      </svg>
    </main>
  </div>
</div>
</body>
</html>
```

FILE: styles.css
```css
* { box-sizing: border-box; }

html { background: #05070c; }

body {
  margin: 0;
  font-family: "Helvetica Neue", "Liberation Sans", Arial, sans-serif;
  font-size: 28px;
  line-height: 40px;
  color: #333;
}

.page {
  min-height: 100vh;
  padding: 32px 0 0 24px;
  background: #fff;
  border-bottom: 2px solid #a3b8d9;
  border-radius: 0 0 16px 16px;
  overflow: hidden;
}

.title {
  margin: 0 0 18px;
  font-size: 62px;
  line-height: 66px;
  font-weight: 400;
  -webkit-text-stroke: 2px #333;
}

/* tabs */
.tabs {
  display: flex;
  gap: 7px;
  margin-right: 28px;
  border-bottom: 2px solid #ddd;
}

.tab {
  margin-bottom: -2px;
  padding: 21px 30px 19px;
  border: 2px solid transparent;
  border-radius: 8px 8px 0 0;
  color: #337ab7;
  text-decoration: none;
}

.tab.active {
  background: #fff;
  border-color: #ddd #ddd #fff;
  color: #555;
}

.row {
  display: grid;
  grid-template-columns: 802fr 1722fr;
  gap: 30px;
  align-items: start;
}

/* control panel */
.well {
  min-height: 848px;
  padding: 39px 38px 37px;
  background: #f5f5f5;
  border: 2px solid #e3e3e3;
  border-radius: 8px;
  box-shadow: inset 0 2px 2px rgba(0, 0, 0, .05);
}

.intro { margin: 0 0 20px; }

.field { margin-bottom: 40px; }

.field label {
  display: block;
  margin-bottom: 10px;
  font-weight: 700;
}

.select { position: relative; }

.select select {
  display: block;
  width: 100%;
  height: 68px;
  padding: 0 24px;
  appearance: none;
  background: #fff;
  border: 2px solid #ccc;
  border-radius: 8px;
  color: #333;
  font: inherit;
}

.select::after {
  content: "";
  position: absolute;
  top: 28px;
  right: 36px;
  border: 10px solid transparent;
  border-top-color: #333;
  border-bottom-width: 0;
  pointer-events: none;
}

.select.open select {
  border-color: #66afe9;
  box-shadow: inset 0 2px 2px rgba(0, 0, 0, .075), 0 0 16px rgba(102, 175, 233, .6);
}

.select.open::after {
  top: 26px;
  border-width: 0 10px 10px;
  border-bottom-color: #333;
}

.menu {
  position: absolute;
  top: 72px;
  left: 0;
  right: 0;
  z-index: 2;
  height: 403px;
  overflow: hidden;
  background: #fff;
  border: 2px solid #d0d0d0;
  border-radius: 8px;
  box-shadow: 0 12px 24px rgba(0, 0, 0, .175);
}

.select.open { z-index: 2; }

.options {
  margin: -36px 0 0;
  padding: 0;
  list-style: none;
}

.options li { padding: 6px 24px; }

.options .current {
  background: #f5f5f5;
  color: #262626;
}

/* map */
.main { min-width: 0; }

.map {
  position: relative;
  height: 800px;
  overflow: hidden;
}

.tiles {
  display: block;
  width: 100%;
  height: 100%;
}

.tiles path, .tiles use { fill: none; stroke-linejoin: round; stroke-linecap: round; }
.tiles .land { fill: #fafaf8; }
.tiles .lite { fill: #f9f9f7; }
.tiles .urban { fill: #f5f5f3; }
.tiles .park { fill: #f2f5f2; }
.tiles .park2 { fill: #ecf1ed; }
.tiles .lake { fill: #d4dadc; }
.tiles .river { stroke: #d0dae0; stroke-width: 5; }
.tiles .river.wide { stroke: #d4dadc; stroke-width: 16; }
.tiles .river.ring { stroke: #d4dadc; stroke-width: 28; }
.tiles .creek { stroke: #d4dadc; stroke-width: 9; }
.tiles .minor { stroke: #e6e6e5; stroke-width: 4; }
.tiles .minor.thick { stroke-width: 7; }
.tiles .dash { stroke: #e3c9cd; stroke-width: 5; stroke-dasharray: 12 12; stroke-linecap: butt; }
.casing { stroke: #dcdcdb; stroke-width: 19; }
.core { stroke: #fff; stroke-width: 10; }

.names {
  font-family: Montserrat, Inter, sans-serif;
  font-weight: 600;
  fill: #949fae;
  stroke: #fafaf8;
  stroke-width: 4px;
  stroke-linejoin: round;
  paint-order: stroke;
  text-anchor: middle;
}
.town { font-size: 20px; }
.city { font-size: 21px; }
.metro { font-size: 27px; }
.start { text-anchor: start; }
.sea { font-size: 18px; font-style: italic; font-weight: 500; fill: #7b92a0; stroke: #dfe4e6; }

.hood { stroke: rgba(255, 255, 255, .75); stroke-width: 5; }
.hood path { fill-opacity: .72; }
.tiles .hood .base { fill: #f8f3f8; fill-opacity: .6; stroke: none; }
.tiles .hood .q1 { fill: #f6f0f7; }
.tiles .hood .q2 { fill: #bfc8de; }
.tiles .hood .q3 { fill: #77a9d0; }
.tiles .hood .q4 { fill: #469097; }
.tiles .hood .q5 { fill: #2f6e59; }
.tiles .hood .islet { fill: #f6f0f7; stroke: none; }
.tiles .ghost { stroke: rgba(60, 70, 120, .07); stroke-width: 12; }
.tiles .bridge { stroke: #fcfbfc; stroke-width: 7; }

.zoom {
  position: absolute;
  top: 20px;
  left: 20px;
  width: 68px;
  border: 4px solid rgba(0, 0, 0, .2);
  border-radius: 8px;
  background-clip: padding-box;
}

.zoom button {
  display: grid;
  place-items: center;
  width: 100%;
  height: 60px;
  padding: 10px 0 0 2px;
  background: #fff;
  border: 0;
}

.zoom button:first-child {
  padding-top: 12px;
  border-bottom: 2px solid #ccc;
  border-radius: 4px 4px 0 0;
}

.zoom button:last-child { border-radius: 0 0 4px 4px; }
.zoom path { fill: none; stroke: #000; stroke-width: 5; }

.popup {
  position: absolute;
  top: 355px;
  left: 790px;
  width: 272px;
  padding: 27px 40px;
  background: #fff;
  border-radius: 24px;
  box-shadow: 0 6px 28px rgba(0, 0, 0, .4);
  font-size: 24px;
  line-height: 34px;
}

.popup p { margin: 0; white-space: nowrap; }

.popup::after {
  content: "";
  position: absolute;
  top: 100%;
  left: 116px;
  border: 20px solid transparent;
  border-top-color: #fff;
  border-bottom-width: 0;
}

.close {
  position: absolute;
  top: 14px;
  right: 12px;
  width: 20px;
  height: 20px;
  padding: 0;
  background: none;
  border: 0;
}

.close svg { display: block; }
.close path { fill: none; stroke: #c3c3c3; stroke-width: 5; }

.credit {
  position: absolute;
  right: 0;
  bottom: 0;
  padding: 0 10px;
  background: rgba(255, 255, 255, .7);
  font-size: 22px;
  line-height: 33px;
}

.credit a { color: #2a7aab; text-decoration: none; }

/* chart */
.chart {
  display: block;
  width: 100%;
  overflow: visible;
  font-family: Verdana, "DejaVu Sans", sans-serif;
  fill: #444;
}

.chart-title { font-size: 35px; text-anchor: middle; }
.axis-title { font-size: 28px; text-anchor: middle; }
.tick { font-size: 24px; }
.tick.end { text-anchor: end; }
.tick.mid { text-anchor: middle; }
.grid { stroke: #eee; stroke-width: 2; }
.axis { stroke: #444; stroke-width: 2; }
```
